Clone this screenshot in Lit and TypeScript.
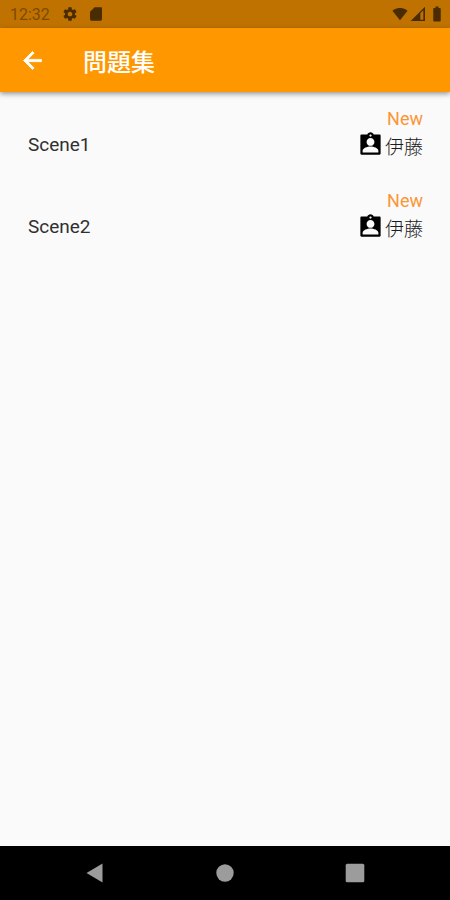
import { LitElement, html, css, svg } from "lit";
import { customElement } from "lit/decorators.js";

interface Scene {
  title: string;
  status: string;
  author: string;
}

const SCENES: Scene[] = [
  { title: "Scene1", status: "New", author: "伊藤" },
  { title: "Scene2", status: "New", author: "伊藤" },
];

const icon = (cls: string, body: unknown) =>
  html`<svg class=${cls} viewBox="0 0 24 24" aria-hidden="true">${body}</svg>`;

const GEAR = svg`<path d="M19.430 12.980c.04-.32.07-.64.07-.98s-.03-.66-.07-.98l2.110-1.650c.19-.15.24-.42.12-.64l-2-3.460c-.12-.22-.39-.3-.61-.22l-2.490 1c-.52-.4-1.080-.73-1.690-.98l-.38-2.650C14.460 2.180 14.250 2 14 2h-4c-.25 0-.46.18-.49.42l-.38 2.650c-.61.25-1.170.59-1.690.98l-2.490-1c-.23-.09-.49 0-.61.22l-2 3.460c-.13.22-.07.49.12.64l2.110 1.650c-.04.32-.07.65-.07.98s.03.66.07.98l-2.110 1.650c-.19.15-.24.42-.12.64l2 3.460c.12.22.39.3.61.22l2.490-1c.52.4 1.080.73 1.690.98l.38 2.650c.03.24.24.42.49.42h4c.25 0 .46-.18.49-.42l.38-2.650c.61-.25 1.170-.59 1.690-.98l2.490 1c.23.09.49 0 .61-.22l2-3.460c.12-.22.07-.49-.12-.64l-2.110-1.650zM12 15.500c-1.930 0-3.500-1.570-3.500-3.500s1.570-3.500 3.500-3.500 3.500 1.570 3.500 3.500-1.570 3.500-3.500 3.500z"/>`;
const SD_CARD = svg`<path d="M20 2H10L3 8.500V20c0 1.100.9 2 2 2h14c1.100 0 2-.9 2-2V4c0-1.100 0-2-1-2z"/>`;
const WIFI = svg`<path d="M12 21.500L.6 7.300C1.100 6.900 5.300 3 12 3s10.900 3.900 11.400 4.300z"/>`;
const SIGNAL = svg`<path fill-rule="evenodd" d="M1 22.500 22.500 1v21.500zM15.500 11v9.500h4.500V6.500z"/>`;
const BATTERY = svg`<path d="M15.700 4H14V2h-4v2H8.300C7.600 4 7 4.600 7 5.300v15.300c0 .8.6 1.400 1.300 1.400h7.300c.8 0 1.400-.6 1.400-1.300V5.300c0-.7-.6-1.300-1.300-1.300z"/>`;
const BACK = svg`<path stroke="currentColor" stroke-width=".7" d="M20 11H7.830l5.590-5.590L12 4l-8 8 8 8 1.410-1.410L7.830 13H20v-2z"/>`;
const PERSON = svg`<path d="M20 3h-5.180C14.400 1.840 13.300 1 12 1c-1.300 0-2.400.84-2.820 2H4c-.6 0-1 .4-1 1v16c0 .6.4 1 1 1h16c.6 0 1-.4 1-1V4c0-.6-.4-1-1-1zm-8 0c.55 0 1 .45 1 1s-.45 1-1 1-1-.45-1-1 .45-1 1-1zm0 3.200c1.950 0 3.500 1.550 3.500 3.500s-1.550 3.500-3.500 3.500-3.500-1.550-3.500-3.500 1.550-3.500 3.500-3.500zm7 13H5v-1.600c0-2.400 4.300-3.800 7-3.800s7 1.400 7 3.800z"/>`;
const NAV_BACK = svg`<path d="M3.500 12 19.500 2.500v19z"/>`;
const NAV_HOME = svg`<circle cx="12" cy="12" r="8.700"/>`;
const NAV_RECENT = svg`<rect x="2.700" y="2.700" width="18.600" height="18.600" rx="1.500"/>`;

@customElement("app-root")
export class AppRoot extends LitElement {
  static styles = css`
    :host {
      display: flex;
      flex-direction: column;
      min-height: 100vh;
      background: #fafafa;
      color: #303030;
      font-family: Roboto, "Noto Sans CJK JP", sans-serif;
      font-size: 19px;
      line-height: 26px;
    }
    svg {
      display: block;
      flex: none;
      fill: currentColor;
    }
    button {
      display: grid;
      place-items: center;
      padding: 0;
      border: 0;
      background: none;
      color: inherit;
    }
    .status {
      display: flex;
      align-items: center;
      justify-content: space-between;
      height: 28px;
      padding: 0 4px 0 10px;
      background: #bf7200;
      color: #4a2c00;
      font-size: 16px;
    }
    .group {
      display: flex;
      align-items: center;
    }
    .time {
      padding-top: 2px;
      margin-right: 12px;
      color: #7c4a00;
    }
    .small {
      width: 16px;
      height: 16px;
    }
    .left-icons,
    .right-icons {
      display: flex;
      align-items: center;
    }
    .left-icons {
      gap: 10px;
    }
    .right-icons {
      gap: 2px;
    }
    .battery {
      width: 18px;
      height: 18px;
    }
    .bar {
      display: flex;
      align-items: center;
      gap: 30px;
      height: 64px;
      padding: 0 11px;
      background: #ff9800;
      color: #fff;
      box-shadow: 0 2px 5px rgba(0, 0, 0, 0.4);
    }
    .back {
      width: 42px;
      height: 48px;
    }
    .arrow {
      width: 27px;
      height: 27px;
    }
    h1 {
      margin: 0;
      padding-top: 5px;
      font-size: 24px;
      font-weight: 500;
    }
    main {
      flex: 1;
    }
    ul {
      margin: 0;
      padding: 0;
      list-style: none;
    }
    li {
      display: flex;
      align-items: center;
      justify-content: space-between;
      height: 82px;
      padding: 0 27px 0 28px;
    }
    .detail {
      display: flex;
      flex-direction: column;
      align-items: flex-end;
    }
    .scene {
      padding-top: 24px;
    }
    .badge {
      color: #fb9636;
      font-size: 18px;
      line-height: 24px;
    }
    .author {
      display: flex;
      align-items: flex-start;
      gap: 1px;
    }
    .name {
      padding-top: 2px;
      color: #1c1c1c;
      font-family: "Noto Sans CJK JP", sans-serif;
      font-weight: 300;
    }
    .person {
      width: 27px;
      height: 27px;
      color: #000;
    }
    nav {
      display: flex;
      align-items: center;
      justify-content: space-around;
      height: 54px;
      padding: 0 30px;
      background: #000;
      color: #9c9c9c;
    }
    nav button {
      width: 48px;
      height: 48px;
    }
    .key {
      width: 24px;
      height: 24px;
    }
  `;

  render() {
    return html`
      <div class="status">
        <div class="group">
          <span class="time">12:32</span>
          <span class="left-icons">${icon("small", GEAR)}${icon("small", SD_CARD)}</span>
        </div>
        <div class="right-icons">
          ${icon("small", WIFI)}${icon("small", SIGNAL)}${icon("battery", BATTERY)}
        </div>
      </div>
      <header class="bar">
        <button class="back" aria-label="戻る">${icon("arrow", BACK)}</button>
        <h1>問題集</h1>
      </header>
      <main>
        <ul>
          ${SCENES.map(
            (s) => html`<li>
              <span class="scene">${s.title}</span>
              <div class="detail">
                <span class="badge">${s.status}</span>
                <span class="author">${icon("person", PERSON)}<span class="name">${s.author}</span></span>
              </div>
            </li>`
          )}
        </ul>
      </main>
      <nav>
        <button aria-label="戻る">${icon("key", NAV_BACK)}</button>
        <button aria-label="ホーム">${icon("key", NAV_HOME)}</button>
        <button aria-label="履歴">${icon("key", NAV_RECENT)}</button>
      </nav>
    `;
  }
}
